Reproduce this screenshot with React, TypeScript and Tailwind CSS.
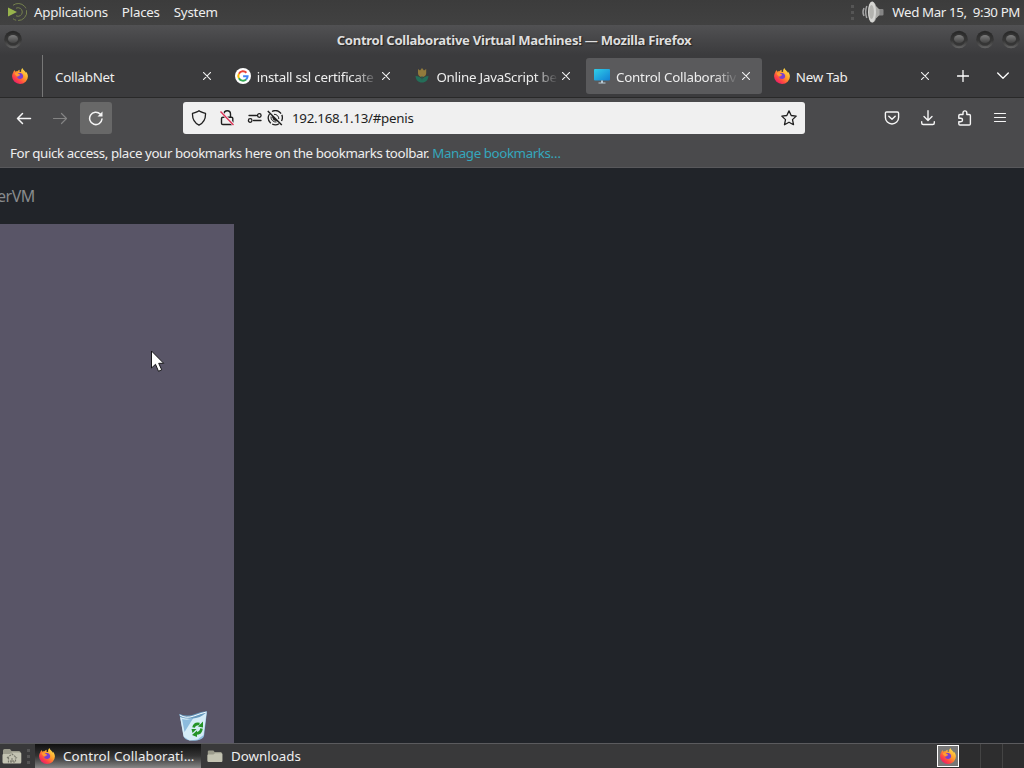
import { ReactNode, useId } from "react"
import { clsx } from "clsx"

type IconProps = { className?: string }

function FirefoxIcon({ className }: IconProps) {
  const id = useId()
  return (
    <svg viewBox="0 0 16 16" className={className ?? "w-4 h-4 shrink-0"}>
      <defs>
        <linearGradient id={id} x1="0.85" y1="0.1" x2="0.15" y2="0.95">
          <stop offset="0" stopColor="#ffe14a" />
          <stop offset="0.4" stopColor="#ff9a2b" />
          <stop offset="0.7" stopColor="#ff4a42" />
          <stop offset="1" stopColor="#e8156f" />
        </linearGradient>
      </defs>
      <path
        fill={`url(#${id})`}
        d="M1.2 4.6C1.5 3.6 2.2 2.6 2.8 2.1c0 .7.2 1.2.5 1.6.7-.4 1.4-.5 2.2-.4.6-.9 1.5-1.5 2.4-1.6-.5.7-.6 1.4-.3 2l1.5.3C9 2.600 9.300 1 10.500.1c.2 1.500 1.400 2.200 2.500 3.300.5.5.8 1 .9 1.500.1-.4 0-.9-.2-1.300 1.300 1.200 2.200 2.900 2.200 4.800a7.900 7.400 0 0 1-15.800.2c-.1-1.400.4-2.900 1.100-4z"
      />
      <path fill="#7a3fd0" d="M5.200 6.300c.8-1.300 2.500-1.700 3.900-1.100 1.500.6 2.300 2 2 3.500-.3 1.400-1.600 2.300-3 2.200-1.700 0-3.200-1.300-3.100-3 .7.400 1.400.2 2-.2.500-.3 1-.4 1.300-.8-.8-.1-1.500-.7-3.100-.6z" />
      <path fill="#ff9b33" d="M2.500 5.400c1.200-.9 2.400-.8 3.200-.2.400.3.900.9 1.900.9.300 0 .1.700-.6 1-.7.400-.8 1-.6 1.600-1 .1-2.500-1.100-3.900-3.300z" />
    </svg>
  )
}

function GoogleIcon() {
  return (
    <svg viewBox="0 0 16 16" className="w-4 h-4 shrink-0">
      <circle cx="8" cy="8" r="8" fill="#fff" />
      <g fill="none" strokeWidth="2">
        <path stroke="#ea4335" d="M3.900 5.700A4.700 4.700 0 0 1 11.400 4.800" />
        <path stroke="#fbbc05" d="M3.900 5.700a4.700 4.700 0 0 0 0 4.600" />
        <path stroke="#34a853" d="M3.900 10.300a4.700 4.700 0 0 0 7.200 1.200" />
        <path stroke="#4285f4" d="M11.100 11.500A4.700 4.700 0 0 0 12.600 8.200H8.100" />
      </g>
    </svg>
  )
}

function TulipIcon() {
  return (
    <svg viewBox="0 0 16 16" className="w-4 h-4 shrink-0">
      <path fill="#927a3c" d="M4 1l2 1.600L8 0l2 2.600L12.200 1v4.200C12.200 7.500 10.500 9 8.100 9S4 7.500 4 5.200z" />
      <path fill="#246e59" d="M1.500 8c3.200 0 5.200 1.300 6.500 3.300C9.400 9.300 11.500 8 14.500 8 14 12.300 12 14.500 8 14.500S2 12.300 1.500 8z" />
      <path fill="none" stroke="#2a6654" d="M8 8v5" />
    </svg>
  )
}

function MonitorIcon() {
  const id = useId()
  return (
    <svg viewBox="0 0 16 16" className="w-4 h-4 shrink-0">
      <linearGradient id={id} x1="0" y1="0" x2="1" y2="1">
        <stop stopColor="#30cfe8" />
        <stop offset="1" stopColor="#1180d5" />
      </linearGradient>
      <rect y="1" width="16" height="11.500" rx="1" fill={`url(#${id})`} />
      <path fill="#b8c9d3" d="M7 12.500h2v2h2.500v1h-7v-1H7z" />
    </svg>
  )
}

function CloseIcon() {
  return (
    <svg viewBox="0 0 8 8" className="w-2 h-2 shrink-0" fill="none" stroke="#f0f0f0" strokeWidth="1.100" strokeLinecap="round">
      <path d="M.3.300l7.400 7.400M7.700.300L.3 7.700" />
    </svg>
  )
}

function FolderIcon({ home }: { home?: boolean }) {
  return (
    <svg viewBox="0 0 20 16" className={home ? "w-5 h-4 shrink-0" : "w-4 h-[14px] shrink-0"}>
      <path fill="#9b9b8c" d="M1 2.500Q1 1 2.500 1H8l1.500 2H17q1.500 0 1.500 1.500V14q0 1-1 1H2q-1 0-1-1z" />
      <path fill="#c3c3b2" d="M.5 7Q.5 6 1.500 6H8l2-1.500h8q1.300 0 1.300 1V14q0 1.500-1.300 1.500H2Q.5 15.500.5 14z" />
      {home && <path fill="none" stroke="#77776b" strokeWidth="1.200" strokeDasharray="2 1" d="M5 10l5-4 5 4M6.500 9.500v4.500h7V9.500M9 14v-3h2v3" />}
    </svg>
  )
}

function WindowKnob() {
  const id = useId()
  return (
    <svg viewBox="0 0 20 20" className="w-5 h-5 shrink-0">
      <defs>
        <linearGradient id={id} x1="0" y1="0" x2="0" y2="1">
          <stop stopColor="#272727" />
          <stop offset="0.55" stopColor="#363636" />
          <stop offset="1" stopColor="#646464" />
        </linearGradient>
        <linearGradient id={id + "b"} x1="0" y1="0" x2="0" y2="1">
          <stop stopColor="#7c7c7c" />
          <stop offset="1" stopColor="#434343" />
        </linearGradient>
      </defs>
      <circle cx="10" cy="9.500" r="8.800" fill={`url(#${id})`} />
      <circle cx="10" cy="9.500" r="6.300" fill="#353535" />
      <ellipse cx="10" cy="9" rx="5" ry="4" fill={`url(#${id}b)`} />
    </svg>
  )
}

function Grip() {
  return (
    <div className="flex flex-col gap-[3px] shrink-0">
      <i className="w-[3px] h-[3px] bg-[#555]" />
      <i className="w-[3px] h-[3px] bg-[#555]" />
      <i className="w-[3px] h-[3px] bg-[#555]" />
    </div>
  )
}

function Tab({ icon, title, active, fade }: { icon?: ReactNode; title: string; active?: boolean; fade?: boolean }) {
  return (
    <div
      className={clsx(
        "w-[175.7px] h-9 mx-[2px] rounded-[3px] flex items-center shrink-0 pl-2 pr-3",
        active && "bg-[#5a5a5c]"
      )}
    >
      {icon}
      <span
        className={clsx(
          "flex-1 min-w-0 whitespace-nowrap mt-[2px] tracking-[-0.23px]",
          icon && "ml-[6px]",
          fade && "tracking-[-0.3px] [mask-image:linear-gradient(to_right,#000_78%,transparent_97%)]"
        )}
      >
        {title}
      </span>
      <CloseIcon />
    </div>
  )
}

function TopPanel() {
  return (
    <div className="h-[25px] bg-gradient-to-b from-[#3c3c3c] to-[#414141] flex items-center shrink-0 pb-px tracking-[-0.23px]">
      <svg viewBox="0 0 20 20" className="w-5 h-5 ml-2 mr-[6px]" fill="none" stroke="#74804d">
        <path fill="#98b34c" stroke="none" d="M0 5.500L9 10l-9 4.500z" />
        <path d="M5 3.300A8.500 8.500 0 1 1 5 16.700" strokeDasharray="15 2" />
        <path d="M8 6.200a4.300 4.300 0 1 1 0 7.600" />
      </svg>
      <span>Applications</span>
      <span className="ml-[14px]">Places</span>
      <span className="ml-[14px]">System</span>
      <div className="ml-auto flex items-center pr-1">
        <Grip />
        <svg viewBox="0 0 24 24" className="w-6 h-6 ml-[7px] mr-[7px]">
          <path fill="none" stroke="#a5a5a5" strokeWidth="1.500" d="M3 8Q1 12 3 16M5.800 6Q3.500 12 5.800 18" />
          <rect x="17" y="9" width="5.500" height="6.500" rx="1" fill="#858585" />
          <path fill="#aaaaa7" d="M11 1.500Q14 2 15 6l3.500 3.500v5.500L15 18.500q-1 4-4 4z" />
          <ellipse cx="11" cy="12" rx="4" ry="10.500" fill="#d5d5d2" />
          <ellipse cx="10.500" cy="12" rx="2.400" ry="7" fill="#b3b3af" />
        </svg>
        <span className="whitespace-pre tracking-[-0.4px]">Wed Mar 15,  9:30 PM</span>
      </div>
    </div>
  )
}

function NavBar() {
  return (
    <div className="h-10 flex items-center shrink-0 text-[#f5f5f5]">
      <svg viewBox="0 0 16 16" className="w-4 h-4 ml-4" fill="none" stroke="currentColor" strokeWidth="1.500" strokeLinecap="round" strokeLinejoin="round">
        <path d="M14.500 8.500H1.500M6.500 3.500l-5 5 5 5" />
      </svg>
      <svg viewBox="0 0 16 16" className="w-4 h-4 ml-5 text-[#838383]" fill="none" stroke="currentColor" strokeWidth="1.200" strokeLinecap="round" strokeLinejoin="round">
        <path d="M1.500 8.500h13M9.500 3.500l5 5-5 5" />
      </svg>
      <div className="w-8 h-8 ml-3 rounded-[3px] bg-[#686868] flex items-center justify-center">
        <svg viewBox="0 0 16 16" className="w-4 h-4" fill="none" stroke="currentColor" strokeWidth="1.500" strokeLinecap="round">
          <path d="M14 9A6.200 6.200 0 1 1 12.200 4" />
          <path d="M14.500 1.500v5h-5z" fill="currentColor" stroke="none" />
        </svg>
      </div>

      {/* Address bar */}
      <div className="w-[622px] h-8 ml-[71px] rounded-[3px] bg-[#f0f0f0] flex items-center text-[#1f1f1f]">
        <svg viewBox="0 0 16 16" className="w-4 h-4 ml-2" fill="none" stroke="currentColor" strokeWidth="1.300" strokeLinejoin="round">
          <path d="M8 .8Q9 1.800 14.500 3.300C14.800 9 12.500 13 8 15.200 3.500 13 1.200 9 1.500 3.300Q7 1.800 8 .8z" />
        </svg>
        <svg viewBox="0 0 16 16" className="w-4 h-4 ml-3" fill="none" stroke="currentColor" strokeWidth="1.400">
          <path d="M5 7V4a3 3 0 0 1 6.500 0v3M4 7.200h8.500q1.300 0 1.300 1.300v4.700q0 1.300-1.300 1.300H3.800q-1.300 0-1.300-1.300V8.500Q2.500 7.200 4 7.200z" />
          <path stroke="#f0f0f0" strokeWidth="3" d="M2 2l13 13" />
          <path stroke="#df3358" d="M1.500 1.500l13 13.500" />
        </svg>
        <svg viewBox="0 0 16 16" className="w-4 h-4 ml-3" fill="none" stroke="currentColor" strokeWidth="1.300" strokeLinecap="round">
          <path d="M2 5.500h7.500M6.500 10.500h7.500" />
          <circle cx="12.300" cy="5.500" r="1.800" />
          <circle cx="3.200" cy="10.500" r="1.800" />
        </svg>
        <svg viewBox="0 0 16 16" className="w-4 h-4 ml-1" fill="none" stroke="currentColor" strokeWidth="1.300">
          <path d="M5 1.500A7 7 0 0 1 14.500 11M2.500 4A7 7 0 0 0 12 13.800" strokeDasharray="10 1.500" />
          <path d="M4 6.500A5 5 0 0 0 9.500 12M7 4.300A4.500 4.500 0 0 1 11.800 9" strokeWidth="1" />
          <path d="M5.500 6.500l4 4-2.500-.7z" fill="currentColor" />
          <path d="M.8 1l14 14" strokeWidth="1.500" />
        </svg>
        <span className="ml-[9px] tracking-[-0.27px]">192.168.1.13/#penis</span>
        <svg viewBox="0 0 16 16" className="w-4 h-4 ml-auto mr-2" fill="none" stroke="currentColor" strokeWidth="1.300" strokeLinejoin="round">
          <path d="M8 .9l2.200 4.600 5 .6-3.700 3.500 1 5.100L8 12.200l-4.500 2.500 1-5.100L.8 6.100l5-.6z" />
        </svg>
      </div>

      {/* Toolbar buttons */}
      <div className="ml-auto mr-4 flex items-center gap-5">
        <svg viewBox="0 0 16 16" className="w-4 h-4" fill="none" stroke="currentColor" strokeWidth="1.400" strokeLinecap="round" strokeLinejoin="round">
          <path d="M2.700 2h10.600q1.300 0 1.300 1.300V7.500a6.600 6.500 0 0 1-13.200 0V3.300Q1.400 2 2.700 2zM4.800 6.200L8 9.300l3.200-3.100" />
        </svg>
        <svg viewBox="0 0 16 16" className="w-4 h-4" fill="none" stroke="currentColor" strokeWidth="1.400" strokeLinecap="round" strokeLinejoin="round">
          <path d="M8 .7v9.600M4 6.500l4 4 4-4M1.700 11.800v1.200q0 1.500 1.500 1.500h9.600q1.500 0 1.500-1.500v-1.200" />
        </svg>
        <svg viewBox="0 0 16 16" className="w-4 h-4" fill="none" stroke="currentColor" strokeWidth="1.400" strokeLinejoin="round">
          <path d="M7 4.500V2.800a1.900 1.900 0 0 1 3.800 0v1.700h2.400q1.200 0 1.200 1.200v8.100q0 1.200-1.200 1.200H4q-1.200 0-1.200-1.200V11.700h2a1.700 1.700 0 0 0 0-3.500h-2V5.700q0-1.200 1.200-1.200z" />
        </svg>
        <svg viewBox="0 0 16 16" className="w-4 h-4" fill="none" stroke="currentColor" strokeWidth="1.200" strokeLinecap="round">
          <path d="M2.500 3.500h11M2.500 7.500h11M2.500 11.500h11" />
        </svg>
      </div>
    </div>
  )
}

function RecycleBin() {
  return (
    <svg viewBox="0 0 30 32" className="absolute left-[179px] top-[542px] w-[30px] h-8">
      <path fill="#91bee0" d="M.5 4Q5 8 15 6L28 1.500 25 26q-1 3-7 4.500-10 1-13-3z" />
      <path fill="#d5ecf7" d="M1 6.500q5 3.500 12 0L27.500 3l-3 22-6 4.500-8 1-6-4z" />
      <path fill="#8cbbdd" d="M3 9q8 2 12-2L5.500 22z" />
      <path fill="#6799bd" d="M.5 4Q9 7 16 4T28 1.200Q25 6 17 8T1 7z" />
      <path fill="none" stroke="#f5fcff" strokeWidth="1" d="M.8 5q6 4 14 1T27.500 2" />
      <g fill="none" stroke="#249326" strokeWidth="2.600">
        <path d="M14.500 17.500q1-4.500 6-3.500M22.500 18.500q-.5 5-5.500 5" />
      </g>
      <path fill="#249326" d="M19 16.500l5-5v6zM18 20.500v6.500l-5-2zM12.500 19h5l-4 4z" />
    </svg>
  )
}

export default function App() {
  return (
    <div className="w-[1024px] h-[768px] overflow-hidden flex flex-col bg-[#212429] text-[#eeeeee] text-[13.33px] leading-[18px] font-['Noto_Sans',sans-serif]">
      <TopPanel />

      {/* Window title */}
      <div className="h-[30px] shrink-0 bg-gradient-to-b from-[#515153] to-[#3b3b3d] flex items-center justify-between px-[3px]">
        <div className="w-[72px]"><WindowKnob /></div>
        <span className="pl-1 font-bold text-[13.1px] tracking-[-0.28px] text-[#dedede] [text-shadow:1px_1px_1px_#222]">
          Control Collaborative Virtual Machines! — Mozilla Firefox
        </span>
        <div className="flex gap-[6px]">
          <WindowKnob />
          <WindowKnob />
          <WindowKnob />
        </div>
      </div>

      {/* Tab strip */}
      <div className="h-[43px] shrink-0 bg-[#3b3b3d] border-b border-[#292929] flex items-center">
        <div className="w-[43px] h-full mr-[2px] pl-3 flex items-center border-r border-[#777]">
          <FirefoxIcon />
        </div>
        <Tab title="CollabNet" />
        <Tab icon={<GoogleIcon />} title="install ssl certificate l" fade />
        <Tab icon={<TulipIcon />} title="Online JavaScript be" fade />
        <Tab icon={<MonitorIcon />} title="Control Collaborativ" active fade />
        <Tab icon={<FirefoxIcon />} title="New Tab" />
        <svg viewBox="0 0 12 12" className="w-3 h-3 ml-[14px]" fill="none" stroke="#fff" strokeWidth="1.300" strokeLinecap="round">
          <path d="M6 .5v11M.5 6h11" />
        </svg>
        <svg viewBox="0 0 12 8" className="w-3 h-2 ml-[28px]" fill="none" stroke="#fff" strokeWidth="1.300" strokeLinecap="round" strokeLinejoin="round">
          <path d="M.7 1L6 6.300 11.300 1" />
        </svg>
      </div>

      <div className="h-[70px] shrink-0 bg-[#4a4a4c] border-b border-[#58585b]">
        <NavBar />
        <div className="h-[29px] px-[10px] pt-[6px] whitespace-nowrap tracking-[-0.41px]">
          For quick access, place your bookmarks here on the bookmarks toolbar.{" "}
          <span className="text-[#35a7bd]">Manage bookmarks…</span>
        </div>
      </div>

      {/* Page */}
      <div className="flex-1 min-h-0 relative overflow-hidden">
        <div className="h-14 flex items-center text-base text-[#888b8d]">
          <span className="-ml-[3px] tracking-[-0.5px]">erVM</span>
        </div>
        <div className="w-[234px] h-[519px] bg-[#595567]" />
        <RecycleBin />
        <svg viewBox="0 0 14 23" className="absolute left-[151px] top-[182px] w-[14px] h-[23px]">
          <path fill="#fff" stroke="#171719" d="M.5 1v17l4-3.700 3 7 3.200-1.500-3-6.500h5z" />
        </svg>
      </div>

      {/* Taskbar */}
      <div className="h-[25px] shrink-0 bg-[#39393a] border-t border-[#5b5b5e] flex items-center">
        <div className="w-[35px] flex items-center gap-[5px] pl-[2px]">
          <FolderIcon home />
          <Grip />
        </div>
        <div className="w-[166px] h-full bg-gradient-to-b from-[#111] via-[#333] to-[#888] flex items-center pl-1 pr-1">
          <FirefoxIcon />
          <span className="ml-2 whitespace-nowrap tracking-[0.15px]">Control Collaborati…</span>
        </div>
        <div className="flex items-center ml-[6px]">
          <FolderIcon />
          <span className="ml-2">Downloads</span>
        </div>
        <div className="ml-auto flex items-center h-full bg-[#2d2d2e]">
          <div className="w-[22px] h-[22px] border border-white bg-[#777] flex items-center justify-center">
            <FirefoxIcon />
          </div>
          <div className="w-[22px] h-full border-r border-[#444]" />
          <div className="w-[22px] h-full border-r border-[#444]" />
          <div className="w-[21px] h-full" />
        </div>
      </div>
    </div>
  )
}
